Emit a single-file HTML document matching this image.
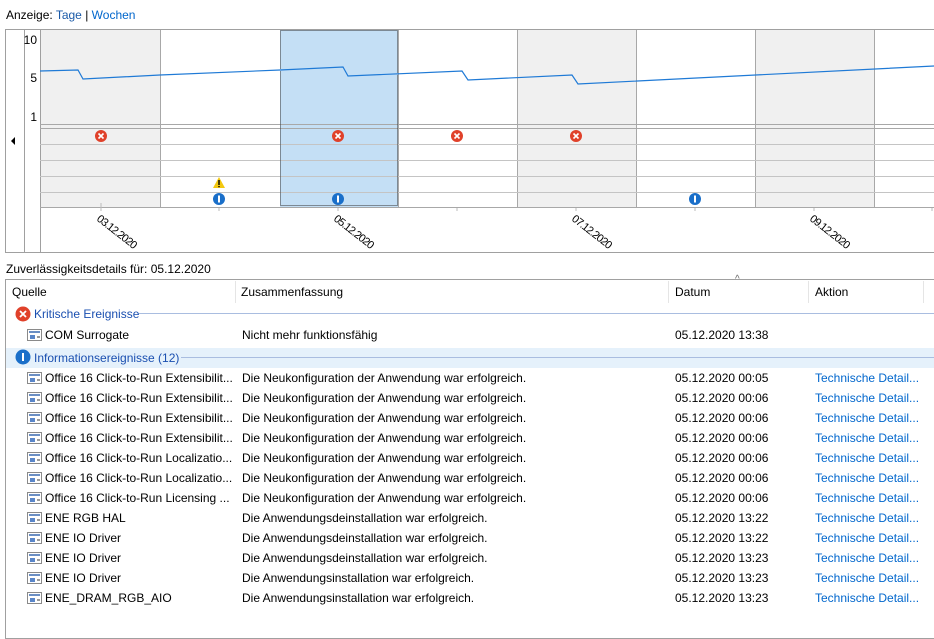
<!DOCTYPE html>
<html><head><meta charset="utf-8"><style>
*{margin:0;padding:0;box-sizing:border-box}
body{width:934px;height:635px;overflow:hidden;background:#fff;font-family:"Liberation Sans",sans-serif;font-size:12px;color:#000;position:relative}
.a{position:absolute;white-space:nowrap}
.lnk{color:#0066cc}
.row{position:absolute;left:0;width:934px;height:20px;line-height:21px}
.row span{position:absolute;white-space:nowrap}
.ic{position:absolute;left:27px;top:4px;width:15px;height:12px;border:1px solid #8a8a8a;background:#fff}
.ic:before{content:"";position:absolute;left:1px;top:1px;right:1px;height:2px;background:#6b8fc4}
.ic:after{content:"";position:absolute;left:2px;top:5px;width:5px;height:4px;background:#5a86c8;box-shadow:6px 0 0 -1px #999}
</style></head><body>
<div class="a" style="left:6px;top:8px">Anzeige: <b style="color:#1a5aa8;font-weight:normal">Tage</b> | <span class="lnk">Wochen</span></div>
<svg class="a" style="left:0;top:0" width="934" height="260">
<defs>
<g id="e"><circle cx="0" cy="0" r="6" fill="#e0412a"/><path d="M-2.5-2.5L2.5 2.5M2.5-2.5L-2.5 2.5" stroke="#fff" stroke-width="1.6"/></g>
<g id="i"><circle cx="0" cy="0" r="6" fill="#1a6fc9"/><rect x="-1" y="-3.5" width="2" height="7" fill="#fff"/></g>
</defs>
<rect x="5.5" y="29.5" width="940" height="223" fill="none" stroke="#a0a0a0"/>
<line x1="24.5" y1="29" x2="24.5" y2="253" stroke="#a0a0a0"/>
<line x1="40.5" y1="29" x2="40.5" y2="253" stroke="#a0a0a0"/>
<polygon points="11,141 15,137 15,145" fill="#000"/>
<rect x="41" y="30" width="119" height="177" fill="#f0f0f0"/>
<rect x="517" y="30" width="119" height="177" fill="#f0f0f0"/>
<rect x="755" y="30" width="119" height="177" fill="#f0f0f0"/>
<rect x="280" y="30" width="118" height="177" fill="#c4dff5"/>
<g stroke="#a8a8a8"><line x1="160.5" y1="30" x2="160.5" y2="207"/><line x1="398.5" y1="30" x2="398.5" y2="207"/><line x1="517.5" y1="30" x2="517.5" y2="207"/><line x1="636.5" y1="30" x2="636.5" y2="207"/><line x1="755.5" y1="30" x2="755.5" y2="207"/><line x1="874.5" y1="30" x2="874.5" y2="207"/></g>
<g stroke="#a8a8a8"><line x1="40" y1="124.5" x2="934" y2="124.5"/><line x1="40" y1="128.5" x2="934" y2="128.5"/><line x1="40" y1="207.5" x2="934" y2="207.5"/></g>
<g stroke="#c4c4c4"><line x1="40" y1="144.5" x2="934" y2="144.5"/><line x1="40" y1="160.5" x2="934" y2="160.5"/><line x1="40" y1="176.5" x2="934" y2="176.5"/><line x1="40" y1="192.5" x2="934" y2="192.5"/></g>
<rect x="280.5" y="30.5" width="117" height="175" fill="none" stroke="#333" stroke-dasharray="1,1"/>
<polyline points="40,71 78,70 83,79 160,75 280,70 343,67 348,76 462,71 468,80 572,75 578,84 934,66" fill="none" stroke="#1f7ad6" stroke-width="1.2"/>
<text x="37" y="44" font-size="12" text-anchor="end" font-family="Liberation Sans">10</text>
<text x="37" y="82" font-size="12" text-anchor="end" font-family="Liberation Sans">5</text>
<text x="37" y="121" font-size="12" text-anchor="end" font-family="Liberation Sans">1</text>
<use href="#e" x="101" y="136"/><use href="#e" x="338" y="136"/><use href="#e" x="457" y="136"/><use href="#e" x="576" y="136"/>
<use href="#i" x="219" y="199"/><use href="#i" x="338" y="199"/><use href="#i" x="695" y="199"/>
<polygon points="219,177 225,188 213,188" fill="#f3c80f"/><rect x="218.3" y="180" width="1.4" height="5" fill="#000"/><rect x="218.3" y="186" width="1.4" height="1.2" fill="#000"/>
<g stroke="#bbb"><line x1="101" y1="203" x2="101" y2="211"/><line x1="219" y1="208" x2="219" y2="211"/><line x1="338" y1="208" x2="338" y2="211"/><line x1="457" y1="208" x2="457" y2="211"/><line x1="576" y1="208" x2="576" y2="211"/><line x1="695" y1="208" x2="695" y2="211"/><line x1="814" y1="208" x2="814" y2="211"/><line x1="932" y1="208" x2="932" y2="211"/></g>
<g font-size="11" font-family="Liberation Sans" letter-spacing="-0.8">
<text transform="translate(96,220) rotate(38)">03.12.2020</text>
<text transform="translate(333,220) rotate(38)">05.12.2020</text>
<text transform="translate(571,220) rotate(38)">07.12.2020</text>
<text transform="translate(809,220) rotate(38)">09.12.2020</text>
</g>
</svg>
<div class="a" style="left:6px;top:262px">Zuverlässigkeitsdetails für: 05.12.2020</div>
<div class="a" style="left:5px;top:279px;width:940px;height:360px;border:1px solid #a0a0a0"></div>
<div class="a" style="left:12px;top:285px">Quelle</div>
<div class="a" style="left:241px;top:285px">Zusammenfassung</div>
<div class="a" style="left:675px;top:285px">Datum</div>
<div class="a" style="left:815px;top:285px">Aktion</div>
<div class="a" style="left:735px;top:274px;font-size:10px;color:#666">^</div>
<div class="a" style="left:235px;top:281px;width:1px;height:22px;background:#e5e5e5"></div>
<div class="a" style="left:668px;top:281px;width:1px;height:22px;background:#e5e5e5"></div>
<div class="a" style="left:808px;top:281px;width:1px;height:22px;background:#e5e5e5"></div>
<div class="a" style="left:923px;top:281px;width:1px;height:22px;background:#e5e5e5"></div>
<svg class="a" style="left:15px;top:306px" width="16" height="16"><circle cx="8" cy="8" r="7.5" fill="#e0412a"/><path d="M5 5L11 11M11 5L5 11" stroke="#fff" stroke-width="1.8"/></svg>
<div class="a" style="left:34px;top:307px;color:#1a4fb0">Kritische Ereignisse</div>
<div class="a" style="left:139px;top:313px;width:795px;height:1px;background:#a9bde0"></div>
<div class="row" style="top:325px"><i class="ic"></i><span style="left:45px">COM Surrogate</span><span style="left:242px">Nicht mehr funktionsfähig</span><span style="left:675px">05.12.2020 13:38</span></div>
<div class="a" style="left:6px;top:348px;width:928px;height:20px;background:#e5f1fb"></div>
<svg class="a" style="left:15px;top:349px" width="16" height="16"><circle cx="8" cy="8" r="7.5" fill="#1a6fc9"/><rect x="7" y="4" width="2" height="8" fill="#fff"/></svg>
<div class="a" style="left:34px;top:351px;color:#1a4fb0">Informationsereignisse (12)</div>
<div class="a" style="left:181px;top:357px;width:753px;height:1px;background:#a9bde0"></div>
<div class="row" style="top:368px"><i class="ic"></i><span style="left:45px">Office 16 Click-to-Run Extensibilit...</span><span style="left:242px">Die Neukonfiguration der Anwendung war erfolgreich.</span><span style="left:675px">05.12.2020 00:05</span><span style="left:815px" class="lnk">Technische Detail...</span></div>
<div class="row" style="top:388px"><i class="ic"></i><span style="left:45px">Office 16 Click-to-Run Extensibilit...</span><span style="left:242px">Die Neukonfiguration der Anwendung war erfolgreich.</span><span style="left:675px">05.12.2020 00:06</span><span style="left:815px" class="lnk">Technische Detail...</span></div>
<div class="row" style="top:408px"><i class="ic"></i><span style="left:45px">Office 16 Click-to-Run Extensibilit...</span><span style="left:242px">Die Neukonfiguration der Anwendung war erfolgreich.</span><span style="left:675px">05.12.2020 00:06</span><span style="left:815px" class="lnk">Technische Detail...</span></div>
<div class="row" style="top:428px"><i class="ic"></i><span style="left:45px">Office 16 Click-to-Run Extensibilit...</span><span style="left:242px">Die Neukonfiguration der Anwendung war erfolgreich.</span><span style="left:675px">05.12.2020 00:06</span><span style="left:815px" class="lnk">Technische Detail...</span></div>
<div class="row" style="top:448px"><i class="ic"></i><span style="left:45px">Office 16 Click-to-Run Localizatio...</span><span style="left:242px">Die Neukonfiguration der Anwendung war erfolgreich.</span><span style="left:675px">05.12.2020 00:06</span><span style="left:815px" class="lnk">Technische Detail...</span></div>
<div class="row" style="top:468px"><i class="ic"></i><span style="left:45px">Office 16 Click-to-Run Localizatio...</span><span style="left:242px">Die Neukonfiguration der Anwendung war erfolgreich.</span><span style="left:675px">05.12.2020 00:06</span><span style="left:815px" class="lnk">Technische Detail...</span></div>
<div class="row" style="top:488px"><i class="ic"></i><span style="left:45px">Office 16 Click-to-Run Licensing ...</span><span style="left:242px">Die Neukonfiguration der Anwendung war erfolgreich.</span><span style="left:675px">05.12.2020 00:06</span><span style="left:815px" class="lnk">Technische Detail...</span></div>
<div class="row" style="top:508px"><i class="ic"></i><span style="left:45px">ENE RGB HAL</span><span style="left:242px">Die Anwendungsdeinstallation war erfolgreich.</span><span style="left:675px">05.12.2020 13:22</span><span style="left:815px" class="lnk">Technische Detail...</span></div>
<div class="row" style="top:528px"><i class="ic"></i><span style="left:45px">ENE IO Driver</span><span style="left:242px">Die Anwendungsdeinstallation war erfolgreich.</span><span style="left:675px">05.12.2020 13:22</span><span style="left:815px" class="lnk">Technische Detail...</span></div>
<div class="row" style="top:548px"><i class="ic"></i><span style="left:45px">ENE IO Driver</span><span style="left:242px">Die Anwendungsdeinstallation war erfolgreich.</span><span style="left:675px">05.12.2020 13:23</span><span style="left:815px" class="lnk">Technische Detail...</span></div>
<div class="row" style="top:568px"><i class="ic"></i><span style="left:45px">ENE IO Driver</span><span style="left:242px">Die Anwendungsinstallation war erfolgreich.</span><span style="left:675px">05.12.2020 13:23</span><span style="left:815px" class="lnk">Technische Detail...</span></div>
<div class="row" style="top:588px"><i class="ic"></i><span style="left:45px">ENE_DRAM_RGB_AIO</span><span style="left:242px">Die Anwendungsinstallation war erfolgreich.</span><span style="left:675px">05.12.2020 13:23</span><span style="left:815px" class="lnk">Technische Detail...</span></div>
</body></html>
